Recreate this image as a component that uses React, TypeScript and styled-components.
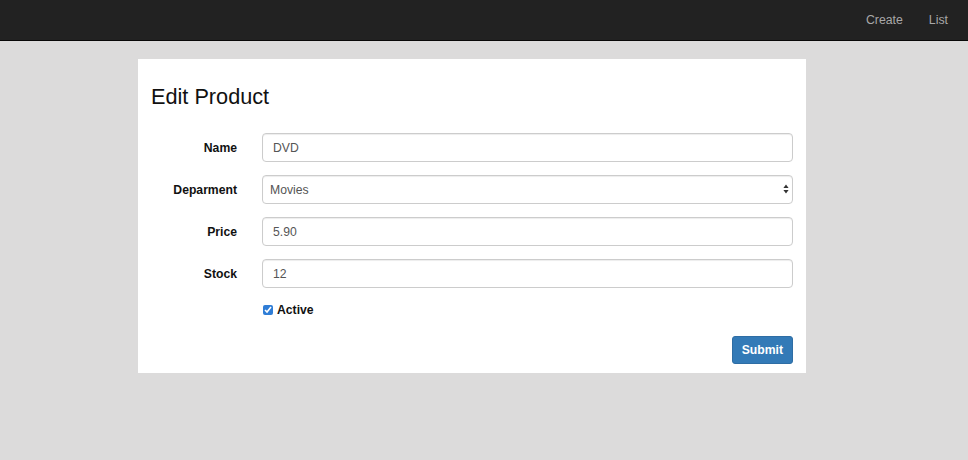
import styled, { createGlobalStyle } from 'styled-components';

const GlobalStyle = createGlobalStyle`
  html, body {
    margin: 0;
    padding: 0;
    background: #dcdbdb;
    font-family: 'Liberation Sans', Arial, sans-serif;
    font-size: 12px;
    color: #333;
  }
`;

const fields = [
  { label: 'Name', value: 'DVD' },
  { label: 'Deparment', value: 'Movies', select: true },
  { label: 'Price', value: '5.90' },
  { label: 'Stock', value: '12' },
];

export default function App() {
  return (
    <>
      <GlobalStyle />
      <StyledNavbar>
        <StyledNavLink>Create</StyledNavLink>
        <StyledNavLink>List</StyledNavLink>
      </StyledNavbar>
      <StyledCard>
        <StyledTitle>Edit Product</StyledTitle>
        <StyledForm>
          {fields.map((f) => (
            <StyledRow key={f.label}>
              <StyledLabel>{f.label}</StyledLabel>
              {f.select ? (
                <StyledSelectWrap>
                  <StyledSelect defaultValue={f.value}>
                    <option>{f.value}</option>
                  </StyledSelect>
                  <StyledArrows width="6" height="10" viewBox="0 0 6 10">
                    <path d="M3 0.5 L5.6 4 L0.4 4 Z M3 9.5 L5.6 6 L0.4 6 Z" fill="#333" />
                  </StyledArrows>
                </StyledSelectWrap>
              ) : (
                <StyledInput defaultValue={f.value} />
              )}
            </StyledRow>
          ))}
          <StyledCheckRow>
            <span />
            <StyledCheckLabel>
              <StyledCheckbox type="checkbox" defaultChecked />
              Active
            </StyledCheckLabel>
          </StyledCheckRow>
          <StyledActions>
            <StyledButton type="button">Submit</StyledButton>
          </StyledActions>
        </StyledForm>
      </StyledCard>
    </>
  );
}

const StyledNavbar = styled.div`
  display: flex;
  justify-content: flex-end;
  align-items: center;
  height: 40px;
  background: #222;
  border-bottom: 1px solid #080808;
  padding-right: 7px;
`;

const StyledNavLink = styled.a`
  color: #a8a8a8;
  font-size: 12.3px;
  padding: 0 13px;
  cursor: pointer;
`;

const StyledCard = styled.div`
  width: 642px;
  margin: 18px 0 0 138px;
  background: #fff;
  padding: 24px 13px 9px 13px;
`;

const StyledTitle = styled.h2`
  margin: 0 0 22px 0;
  font-size: 21.7px;
  font-weight: 400;
  color: #111;
  line-height: 28px;
`;

const StyledForm = styled.form`
  display: flex;
  flex-direction: column;
  gap: 13px;
`;

const StyledRow = styled.div`
  display: grid;
  grid-template-columns: 86px 1fr;
  column-gap: 25px;
  align-items: center;
`;

const StyledCheckRow = styled(StyledRow)`
  height: 18px;
`;

const StyledLabel = styled.label`
  text-align: right;
  font-weight: 700;
  font-size: 12.2px;
  color: #111;
`;

const StyledInput = styled.input`
  box-sizing: border-box;
  height: 29px;
  width: 100%;
  border: 1px solid #ccc;
  border-radius: 4px;
  padding: 0 10px;
  font-family: inherit;
  font-size: 12.2px;
  color: #555;
  box-shadow: inset 0 1px 1px rgba(0, 0, 0, 0.075);
`;

const StyledSelectWrap = styled.div`
  position: relative;
`;

const StyledSelect = styled.select`
  display: block;
  box-sizing: border-box;
  height: 29px;
  width: 100%;
  border: 1px solid #ccc;
  border-radius: 4px;
  padding: 0 7px;
  font-family: inherit;
  font-size: 12.2px;
  color: #555;
  background: #fff;
  appearance: none;
  box-shadow: inset 0 1px 1px rgba(0, 0, 0, 0.075);
`;

const StyledArrows = styled.svg`
  position: absolute;
  right: 4px;
  top: 9px;
  pointer-events: none;
`;

const StyledCheckLabel = styled.label`
  display: flex;
  align-items: center;
  gap: 4px;
  font-weight: 700;
  font-size: 12.2px;
  color: #111;
`;

const StyledCheckbox = styled.input`
  margin: 0 0 0 1px;
  width: 10px;
  height: 10px;
  accent-color: #2f7dd6;
`;

const StyledActions = styled.div`
  display: flex;
  justify-content: flex-end;
  margin-top: 4px;
`;

const StyledButton = styled.button`
  height: 28px;
  padding: 0 9px;
  border: 1px solid #2e6da4;
  border-radius: 3px;
  background: #337ab7;
  color: #fff;
  font-family: inherit;
  font-size: 12.2px;
  font-weight: 700;
`;
